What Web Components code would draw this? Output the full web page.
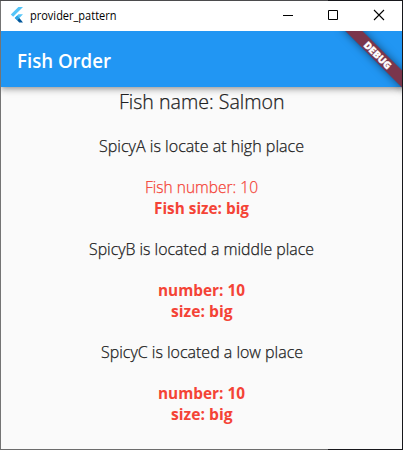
<!DOCTYPE html>
<html lang="en">
<head>
<meta charset="utf-8">
<title>provider_pattern</title>
<style>
html, body { margin: 0; height: 100%; }
body { font-family: "Open Sans", "Noto Sans", sans-serif; overflow: hidden; }
</style>
</head>
<body>
<app-window>
  <title-bar slot="title"><fit-text width="86.5">provider_pattern</fit-text></title-bar>
  <app-bar slot="bar"><fit-text width="94">Fish Order</fit-text></app-bar>
  <text-line kind="head"><fit-text width="165.5">Fish name: Salmon</fit-text></text-line>
  <text-line><fit-text width="205">SpicyA is locate at high place</fit-text></text-line>
  <text-line kind="red"><fit-text width="113">Fish number: 10</fit-text></text-line>
  <text-line kind="bold"><fit-text width="95">Fish size: big</fit-text></text-line>
  <text-line kind="gap"><fit-text width="225">SpicyB is located a middle place</fit-text></text-line>
  <text-line kind="bold gap"><fit-text width="87">number: 10</fit-text></text-line>
  <text-line kind="bold"><fit-text width="61.5">size: big</fit-text></text-line>
  <text-line kind="gap"><fit-text width="202">SpicyC is located a low place</fit-text></text-line>
  <text-line kind="bold gap"><fit-text width="87">number: 10</fit-text></text-line>
  <text-line kind="bold"><fit-text width="61.5">size: big</fit-text></text-line>
  <debug-banner slot="banner"></debug-banner>
</app-window>
<script>
// Text set to a given advance width by scaling its glyphs horizontally.
class FitText extends HTMLElement {
  connectedCallback() {
    const root = this.attachShadow({ mode: 'open' });
    root.innerHTML = `<style>
      :host { display: block; white-space: nowrap; }
      span { display: inline-block; transform-origin: 0 0; vertical-align: top; }
    </style><span><slot></slot></span>`;
    const width = Number(this.getAttribute('width'));
    this.style.width = width + 'px';
    const span = root.querySelector('span');
    span.style.transform = `scaleX(${width / span.getBoundingClientRect().width})`;
  }
}

class AppWindow extends HTMLElement {
  constructor() {
    super();
    this.attachShadow({ mode: 'open' }).innerHTML = `<style>
      :host { display: grid; box-sizing: border-box; width: 403px; height: 450px; padding: 1px;
        grid-template-rows: 30px 1fr;
        background:
          linear-gradient(90deg, #4b4b4d 328px, #17171b 328px) 0 0 / 403px 1px no-repeat,
          linear-gradient(90deg, #6c6c6c 328px, #17171b 328px) 0 449px / 403px 1px no-repeat,
          linear-gradient(90deg, #747474 200px, #17171b 200px); }
      .client { position: relative; overflow: hidden; background: #fafafa; display: flex; flex-direction: column; }
      main { display: flex; flex-direction: column; align-items: center; }
    </style>
    <slot name="title"></slot>
    <div class="client"><slot name="bar"></slot><main><slot></slot></main><slot name="banner"></slot></div>`;
  }
}

class TitleBar extends HTMLElement {
  constructor() {
    super();
    this.attachShadow({ mode: 'open' }).innerHTML = `<style>
      :host { display: flex; background: #fff; color: #000; font-size: 12px; line-height: 17px; }
      .logo { width: 14px; height: 16px; margin: 6px 6px 0 9px; flex: none; }
      .name { padding-top: 6px; flex: 1; }
      .btn { height: 30px; flex: none; }
    </style>
    <svg class="logo" viewBox="0 0 14 16">
      <path d="M8.4 0H13L3.2 9.8.8 7.5z" fill="#54c5f8"/>
      <path d="M8.4 7.3H13L9.4 11 7.1 13.3 4.7 10.9z" fill="#54c5f8"/>
      <path d="M7.1 8.6 9.4 11 7.1 13.3 4.7 10.9z" fill="#29a4e6"/>
      <path d="M7.1 13.3 9.4 11 13 15.4H9.2z" fill="#01579b"/>
    </svg>
    <div class="name"><slot></slot></div>
    <svg class="btn" style="width:46px" viewBox="0 0 46 30"><path d="M18 14.5H28" stroke="#000"/></svg>
    <svg class="btn" style="width:45px" viewBox="0 0 45 30"><path d="M17.5 9.5h9v9h-9z" fill="none" stroke="#000"/></svg>
    <svg class="btn" style="width:46px" viewBox="0 0 46 30"><path d="M18 9 28 19M28 9 18 19" stroke="#000" stroke-width="1.1"/></svg>`;
  }
}

class AppBar extends HTMLElement {
  constructor() {
    super();
    this.attachShadow({ mode: 'open' }).innerHTML = `<style>
      :host { display: flex; align-items: center; flex: none; box-sizing: border-box; height: 56px; padding: 4px 0 0 16px;
        position: relative; background: #2196f3; color: #fff; font-size: 19.5px; font-weight: 600; line-height: 24px;
        box-shadow: 0 2px 4px -1px rgba(0,0,0,.2), 0 4px 5px rgba(0,0,0,.14), 0 1px 10px rgba(0,0,0,.12); }
    </style><slot></slot>`;
  }
}

class TextLine extends HTMLElement {
  constructor() {
    super();
    this.attachShadow({ mode: 'open' }).innerHTML = `<style>
      :host { display: block; font-size: 16px; line-height: 20.6px; color: #212121; font-weight: 300;
        margin-top: 20.6px; -webkit-text-stroke: .25px currentColor; }
      :host([kind="head"]) { font-size: 19.5px; line-height: 28px; margin: 1px 0 -.7px; }
      :host([kind="red"]) { color: #f44336; }
      :host([kind~="bold"]) { color: #f44336; font-weight: 700; margin-top: 0; -webkit-text-stroke: 0; }
      :host([kind~="gap"]) { margin-top: 20.6px; }
    </style><slot></slot>`;
  }
}

class DebugBanner extends HTMLElement {
  constructor() {
    super();
    this.attachShadow({ mode: 'open' }).innerHTML = `<style>
      :host { position: absolute; top: 0; right: 0; width: 0; height: 0; transform: rotate(45deg); }
      div { position: absolute; left: -45px; top: 28px; width: 90px; height: 12px; }
      .shade { box-shadow: 0 0 8px rgba(0,0,0,.5); background: rgba(0,0,0,.36); }
      .band { background: rgba(183,28,28,.627); color: #fff; text-align: center;
        font: 800 10px/12px "Open Sans", sans-serif; -webkit-text-stroke: .3px #fff; }
    </style><div class="shade"></div><div class="band">DEBUG</div>`;
  }
}

customElements.define('app-window', AppWindow);
customElements.define('title-bar', TitleBar);
customElements.define('app-bar', AppBar);
customElements.define('text-line', TextLine);
customElements.define('debug-banner', DebugBanner);
customElements.define('fit-text', FitText);
</script>
</body>
</html>
